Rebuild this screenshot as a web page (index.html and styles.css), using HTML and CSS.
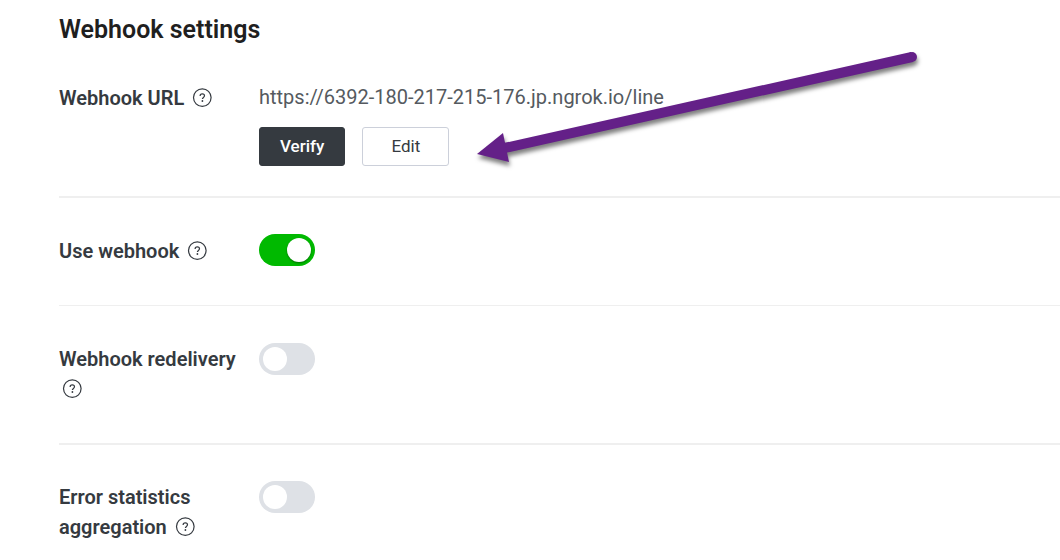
FILE: index.html
```html
<!DOCTYPE html>
<html lang="en">
<head>
<meta charset="utf-8">
<title>Webhook settings</title>
<link rel="stylesheet" href="styles.css">
</head>
<body>
<svg class="defs" aria-hidden="true">
  <symbol id="help" viewBox="0 0 20 20">
    <circle cx="10.3" cy="9.6" r="8.8" fill="none" stroke="currentColor" stroke-width="1.2"/>
    <path d="M8.1 7.9C8.1 6.6 9 5.9 10.3 5.9s2.2.7 2.2 1.9c0 1.6-2.1 1.7-2.1 3.3" fill="none" stroke="currentColor" stroke-width="1.2"/>
    <circle cx="10.4" cy="13" r=".9" fill="currentColor"/>
  </symbol>
</svg>
<main class="settings">
  <h1 class="title">Webhook settings</h1>
  <section class="row row-url">
    <h2 class="label">Webhook URL <button class="help" type="button" aria-label="About webhook URL"><svg><use href="#help"/></svg></button></h2>
    <div class="content">
      <p class="url">https://6392-180-217-215-176.jp.ngrok.io/line</p>
      <div class="actions">
        <button class="btn btn-dark" type="button">Verify</button>
        <button class="btn" type="button">Edit</button>
      </div>
    </div>
  </section>
  <section class="row row-thin">
    <div class="label"><label for="use">Use webhook</label> <button class="help" type="button" aria-label="About use webhook"><svg><use href="#help"/></svg></button></div>
    <div class="content"><input class="switch" type="checkbox" id="use" checked></div>
  </section>
  <section class="row row-redelivery">
    <div class="label"><label for="redelivery">Webhook redelivery</label> <button class="help" type="button" aria-label="About webhook redelivery"><svg><use href="#help"/></svg></button></div>
    <div class="content"><input class="switch" type="checkbox" id="redelivery"></div>
  </section>
  <section class="row row-last">
    <div class="label"><label for="errors">Error statistics aggregation</label> <button class="help" type="button" aria-label="About error statistics aggregation"><svg><use href="#help"/></svg></button></div>
    <div class="content"><input class="switch" type="checkbox" id="errors"></div>
  </section>
</main>
<svg class="arrow" viewBox="0 0 460 130" aria-hidden="true">
  <path d="M442 17L30 109" stroke="#642088" stroke-width="10"/>
  <circle cx="442" cy="17" r="5" fill="#642088"/>
  <path d="M7 114L33 93L39 122Z" fill="#642088"/>
</svg>
</body>
</html>
```

FILE: styles.css
```css
* { box-sizing: border-box; }
body {
  margin: 0;
  background: #fff;
  color: #353a40;
  font: 400 20px/30px Roboto, sans-serif;
}
.defs { position: absolute; width: 0; height: 0; }
.settings { padding: 14px 0 0 59px; overflow: hidden; }
.title {
  margin: 0;
  color: #1f1f1f;
  font-size: 25px;
  line-height: 32px;
  font-weight: 600;
}
.row {
  display: grid;
  grid-template-columns: 180px 1fr;
  column-gap: 20px;
  padding: 36px 0 39px;
  border-bottom: 2px solid #efefef;
}
.row-url { padding: 36px 0 30px; }
.row-thin { border-bottom-width: 1px; }
.row-thin .label { margin-top: 2px; }
.row-redelivery { padding-top: 37px; }
.row-last { border-bottom: 0; padding-bottom: 0; }
.label {
  margin: 1px 0 0;
  font-size: 20px;
  font-weight: 600;
}
.help {
  width: 20px;
  height: 20px;
  margin: 0 0 0 3px;
  padding: 0;
  border: 0;
  background: none;
  color: inherit;
  vertical-align: -3px;
  cursor: pointer;
}
.help svg { display: block; width: 20px; height: 20px; }
.content { min-width: 0; }
.url { margin: 0; color: #555a60; overflow-wrap: anywhere; }
.actions { display: flex; gap: 17px; margin-top: 15px; }
.btn {
  min-width: 87px;
  height: 39px;
  padding: 0 20px 2px;
  border: 1px solid #ccd0da;
  border-radius: 3px;
  background: #fff;
  color: #353a40;
  font: 400 17px/24px Roboto, sans-serif;
}
.btn-dark {
  min-width: 86px;
  border-color: #353a40;
  background: #353a40;
  color: #fff;
  font-weight: 500;
}
.switch {
  appearance: none;
  display: flex;
  align-items: center;
  width: 56px;
  height: 32px;
  margin: 0;
  padding: 0 4px;
  border-radius: 16px;
  background: #dee1e6;
}
.switch::before {
  content: "";
  width: 24px;
  height: 24px;
  border-radius: 50%;
  background: #fff;
}
.switch:checked { justify-content: flex-end; background: #00b900; }
.switch:checked::before { box-shadow: 0 1px 2px rgba(0, 0, 0, .4); }
.arrow {
  position: absolute;
  left: 470px;
  top: 40px;
  width: 460px;
  height: 130px;
  overflow: visible;
  pointer-events: none;
  filter: drop-shadow(1px 4px 2px rgba(0, 0, 0, .5));
}
```
